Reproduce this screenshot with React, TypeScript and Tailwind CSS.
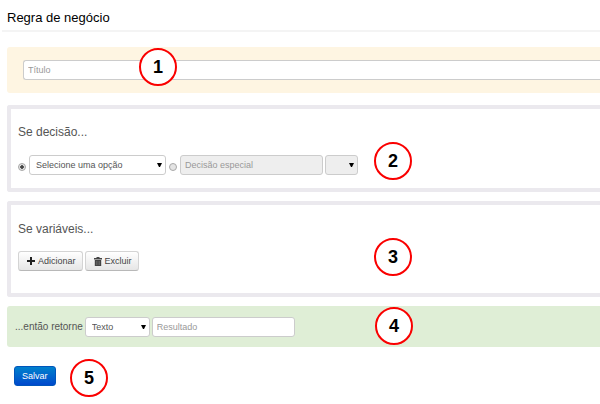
import type { ReactNode, SelectHTMLAttributes } from "react";

const field =
  "h-5 rounded-[3px] border border-[#cccccc] px-1 text-[9px] leading-3 text-[#555555] outline-none placeholder:text-[#999999]";

const button =
  "flex h-5 items-center gap-[3px] rounded-[3px] border border-[#d4d4d4] border-b-[#b8b8b8] bg-linear-to-b from-white to-[#e6e6e6] pr-[6px] pl-2 text-[9px] leading-3 text-[#444444]";

function Marker({ n, className }: { n: number; className: string }) {
  return (
    <span
      className={`absolute flex size-[38px] items-center justify-center rounded-full border-2 border-[#fa0000] bg-white text-[18px] leading-5 font-bold text-black ${className}`}
    >
      {n}
    </span>
  );
}

function Select({
  width,
  children,
  disabled,
  ...rest
}: { width: string; children?: ReactNode } & SelectHTMLAttributes<HTMLSelectElement>) {
  return (
    <span className={`relative block ${width}`}>
      <select
        {...rest}
        disabled={disabled}
        className={`block h-5 w-full appearance-none rounded-[3px] border border-[#cccccc] px-1.5 text-[9px] leading-3 text-[#555555] opacity-100 outline-none ${disabled ? "bg-[#eeeeee]" : "bg-white"}`}
      >
        {children}
      </select>
      <svg
        viewBox="0 0 5 4"
        className="pointer-events-none absolute top-2 right-1 h-1 w-[5px]"
        aria-hidden="true"
      >
        <path d="M0 0h5L3 4H2z" fill="#000" />
      </svg>
    </span>
  );
}

function Radio({ label, checked }: { label: string; checked?: boolean }) {
  return (
    <input
      type="radio"
      name="decisao"
      aria-label={label}
      defaultChecked={checked}
      className="mt-1 size-2 appearance-none rounded-full border border-[#a8a8a8] bg-[#e4e4e4] checked:bg-[radial-gradient(circle,#444444_35%,#e4e4e4_50%)]"
    />
  );
}

export default function App() {
  return (
    <main className="overflow-hidden bg-white pb-4 font-['Liberation_Sans',Arial,sans-serif] text-[#555555]">
      <h1 className="ml-0.5 border-b-2 border-[#f4f4f4] pt-[9px] pb-[3px] pl-[5px] text-[13px] leading-[18px] text-black">
        Regra de negócio
      </h1>

      <form className="ml-[7px]" onSubmit={(e) => e.preventDefault()}>
        <section className="relative mt-[15px] rounded-l-[3px] bg-[#fef5e2] py-[13px] pl-4">
          <input
            type="text"
            placeholder="Título"
            aria-label="Título"
            className={`${field} block w-full rounded-r-none border-r-0 bg-white`}
          />
          <Marker n={1} className="top-px left-[132px]" />
        </section>

        <section className="relative mt-3 h-[87px] rounded-l-[3px] border-4 border-r-0 border-[#ebe9ee] pt-[15px] pl-[7px]">
          <h2 className="text-[12px] leading-4">Se decisão...</h2>
          <div className="mt-[15px] flex items-center">
            <Radio label="Selecione uma opção" checked />
            <div className="ml-[3px] flex items-center gap-[3px]">
              <Select width="w-[137px]" aria-label="Decisão">
                <option>Selecione uma opção</option>
              </Select>
              <Radio label="Decisão especial" />
            </div>
            <div className="ml-[3px] flex gap-[2px]">
              <input
                type="text"
                disabled
                placeholder="Decisão especial"
                aria-label="Decisão especial"
                className={`${field} w-[143px] bg-[#eeeeee]`}
              />
              <Select width="w-[33px]" disabled aria-label="Tipo de decisão especial" />
            </div>
          </div>
          <Marker n={2} className="top-[33px] left-[363px]" />
        </section>

        <section className="relative mt-[9px] h-24 rounded-l-[3px] border-4 border-r-0 border-[#ebe9ee] pt-4 pl-[7px]">
          <h2 className="text-[12px] leading-4">Se variáveis...</h2>
          <div className="mt-[14px] flex gap-[2px]">
            <button type="button" className={button}>
              <svg viewBox="0 0 8 8" className="size-2" aria-hidden="true">
                <path d="M3 0h2v3h3v2H5v3H3V5H0V3h3z" fill="#222" />
              </svg>
              Adicionar
            </button>
            <button type="button" className={button}>
              <svg viewBox="0 0 8 9" className="h-[9px] w-2" aria-hidden="true">
                <path d="M2.500 0h3v1H8v1.500H0V1h2.500zM.8 3h6.400v6H.8z" fill="#444" />
                <path d="M2.500 4v4M4 4v4M5.500 4v4" stroke="#888" strokeWidth=".4" />
              </svg>
              Excluir
            </button>
          </div>
          <Marker n={3} className="top-[33px] left-[363px]" />
        </section>

        <section className="relative mt-[9px] flex items-center rounded-l-[3px] bg-[#dfeed6] pt-[11px] pb-[10px] pl-2">
          <label htmlFor="tipo" className="text-[10px] leading-4">
            ...então retorne
          </label>
          <div className="ml-[2px] flex gap-[2px]">
            <Select id="tipo" width="w-[65px]">
              <option>Texto</option>
            </Select>
            <input
              type="text"
              placeholder="Resultado"
              aria-label="Resultado"
              className={`${field} w-[143px] bg-white`}
            />
          </div>
          <Marker n={4} className="top-px left-[368px]" />
        </section>

        <div className="relative mt-[19px] pl-[7px]">
          <button
            type="submit"
            className="block h-5 rounded-[3px] border border-[#0055bb] bg-linear-to-b from-[#0080cc] to-[#0048cc] px-[7px] text-[9px] leading-3 text-white"
          >
            Salvar
          </button>
          <Marker n={5} className="-top-[7px] left-[63px]" />
        </div>
      </form>
    </main>
  );
}
